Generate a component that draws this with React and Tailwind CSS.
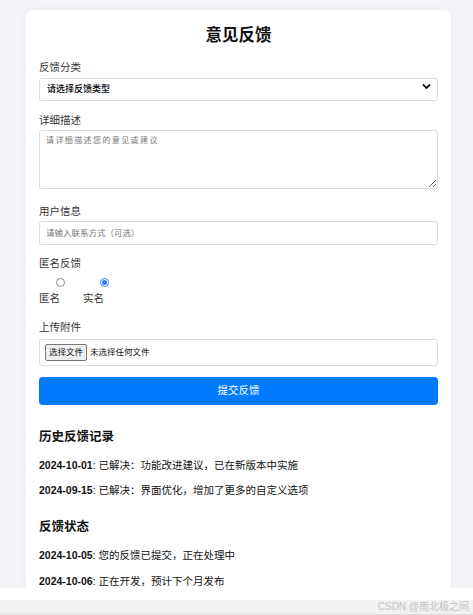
import { useState } from 'react';

const history = [
  { date: '2024-10-01', text: '已解决：功能改进建议，已在新版本中实施' },
  { date: '2024-09-15', text: '已解决：界面优化，增加了更多的自定义选项' },
];

const status = [
  { date: '2024-10-05', text: '您的反馈已提交，正在处理中' },
  { date: '2024-10-06', text: '正在开发，预计下个月发布' },
];

function Radio({ checked, label, onClick }) {
  return (
    <div className="w-[44px] flex flex-col cursor-pointer" onClick={onClick}>
      <span
        className={
          'ml-[17px] w-[9px] h-[9px] rounded-full border flex items-center justify-center ' +
          (checked ? 'border-[#3b82f6] bg-white' : 'border-[#8a8a8a] bg-white')
        }
      >
        {checked && <span className="w-[5px] h-[5px] rounded-full bg-[#2f7cf6]" />}
      </span>
      <span className="mt-[3px] text-[10.5px] leading-[16px] text-[#333]">{label}</span>
    </div>
  );
}

export default function App() {
  const [anon, setAnon] = useState(false);

  return (
    <div className="w-[473px] h-[615px] overflow-hidden font-['Liberation_Sans','Noto_Sans_CJK_SC',sans-serif]">
      <div className="h-[588px] overflow-hidden bg-[#f4f5f8] pt-[10px]">
        <div className="ml-[26px] w-[425px] bg-white rounded-[7px] shadow-[0_0_6px_rgba(0,0,0,0.06)] px-[13px] pt-[14px] pb-6">
          <h1 className="text-center text-[16.5px] leading-[22px] font-bold text-[#111]">意见反馈</h1>

          <div className="mt-[13px]">
            <label className="block text-[10.5px] leading-[16px] text-[#333]">反馈分类</label>
            <div className="relative">
              <select className="w-full h-[23px] border border-[#dcdcdc] rounded-[3px] pl-[7px] text-[9px] text-[#000] font-medium appearance-none bg-white">
                <option>请选择反馈类型</option>
              </select>
              <svg className="absolute right-[7px] top-[8px] pointer-events-none" width="9" height="7" viewBox="0 0 9 7">
                <path d="M1 1.5 L4.5 5 L8 1.5" fill="none" stroke="#111" strokeWidth="1.8" />
              </svg>
            </div>
          </div>

          <div className="mt-[11px]">
            <label className="block text-[10.5px] leading-[16px] text-[#333] mb-[2px]">详细描述</label>
            <textarea
              className="block w-full h-[59px] border border-[#dcdcdc] rounded-[3px] px-[6px] py-[4px] text-[8px] tracking-[1.4px] placeholder:text-[#777]"
              placeholder="请详细描述您的意见或建议"
            />
          </div>

          <div className="mt-[14px]">
            <label className="block text-[10.5px] leading-[16px] text-[#333] mb-[2px]">用户信息</label>
            <input
              className="block w-full h-[24px] border border-[#dcdcdc] rounded-[3px] px-[6px] text-[8.5px] placeholder:text-[#777]"
              placeholder="请输入联系方式（可选）"
            />
          </div>

          <div className="mt-[10px]">
            <label className="block text-[10.5px] leading-[16px] text-[#333]">匿名反馈</label>
            <div className="flex mt-[7px]">
              <Radio checked={anon} label="匿名" onClick={() => setAnon(true)} />
              <Radio checked={!anon} label="实名" onClick={() => setAnon(false)} />
            </div>
          </div>

          <div className="mt-[13px]">
            <label className="block text-[10.5px] leading-[16px] text-[#333] mb-[4px]">上传附件</label>
            <div className="h-[27px] border border-[#dcdcdc] rounded-[3px] flex items-center pl-[5px] gap-[3px]">
              <span className="h-[17px] px-[3px] flex items-center border border-[#767676] bg-[#efefef] rounded-[2px] text-[8.5px] text-[#111]">
                选择文件
              </span>
              <span className="text-[8.5px] text-[#111]">未选择任何文件</span>
            </div>
          </div>

          <button className="mt-[11px] w-full h-[28px] bg-[#007bff] rounded-[4px] text-white text-[10.5px]">
            提交反馈
          </button>

          <h3 className="mt-[24px] text-[12.5px] leading-[16px] font-bold text-[#111]">历史反馈记录</h3>
          <div className="mt-[12px] flex flex-col gap-[9px]">
            {history.map((h) => (
              <p key={h.date} className="text-[10.5px] leading-[16px] text-[#111]">
                <strong>{h.date}</strong>: {h.text}
              </p>
            ))}
          </div>

          <h3 className="mt-[21px] text-[12.5px] leading-[16px] font-bold text-[#111]">反馈状态</h3>
          <div className="mt-[12px] flex flex-col gap-[10px]">
            {status.map((h) => (
              <p key={h.date} className="text-[10.5px] leading-[16px] text-[#111]">
                <strong>{h.date}</strong>: {h.text}
              </p>
            ))}
          </div>
        </div>
      </div>
      <div className="h-[12px] bg-white" />
      <div className="h-[15px] bg-[#f1f1f1] border-b border-[#dedede] flex items-center justify-end pr-[4px]">
        <span className="text-[10px] leading-[12px] text-[#c4c4c4]">CSDN @南北极之间</span>
      </div>
    </div>
  );
}
